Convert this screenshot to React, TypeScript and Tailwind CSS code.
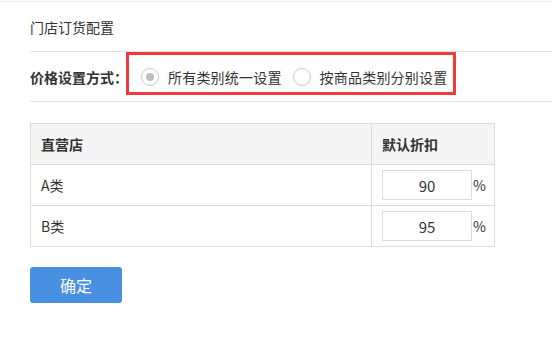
import { useState } from 'react'

const rows = [
  { name: 'A类', value: '90' },
  { name: 'B类', value: '95' },
]

function Radio({ checked, label }: { checked: boolean; label: string }) {
  return (
    <label className="flex items-center gap-[9px] cursor-pointer">
      <span className="w-[18px] h-[18px] rounded-full border border-[#c8c8c8] bg-white flex items-center justify-center">
        {checked && <span className="w-[8px] h-[8px] rounded-full bg-[#bdbdbd]" />}
      </span>
      <span className="text-[14px] tracking-[0.2px] text-[#333]">{label}</span>
    </label>
  )
}

export default function App() {
  const [values, setValues] = useState(rows.map((r) => r.value))

  return (
    <div
      className="w-[552px] h-[346px] bg-white text-[#333] leading-none"
      style={{ fontFamily: '"Noto Sans CJK SC", "Liberation Sans", sans-serif' }}
    >
      <div className="pt-[1px]">
        <div className="border-t border-[#eeeeee]" />
      </div>

      {/* title */}
      <div className="pl-[30px]">
        <div className="h-[50px] flex items-center text-[14px] text-[#333] border-b border-[#e3e3e3]">
          门店订货配置
        </div>

        {/* price setting row */}
        <div className="relative h-[50px] flex items-center border-b border-[#e3e3e3]">
          <span className="text-[14px] font-bold text-[#333] w-[111px]">价格设置方式：</span>
          <div className="flex items-center gap-[11px]">
            <Radio checked label="所有类别统一设置" />
            <Radio checked={false} label="按商品类别分别设置" />
          </div>
          <div className="absolute left-[96px] top-0 w-[330px] h-[43px] border-[3px] border-[#ef3b3b] pointer-events-none" />
        </div>
      </div>

      {/* table */}
      <div className="pl-[30px] pt-[21px]">
        <table className="border-collapse text-[14px]">
          <thead>
            <tr className="bg-[#f5f5f5] h-[41px]">
              <th className="w-[341px] border border-[#dddddd] text-left font-bold pl-[10px]">直营店</th>
              <th className="w-[123px] border border-[#dddddd] text-left font-bold pl-[10px]">默认折扣</th>
            </tr>
          </thead>
          <tbody>
            {rows.map((r, i) => (
              <tr key={r.name} className="h-[41px]">
                <td className="border border-[#dddddd] pl-[10px]">{r.name}</td>
                <td className="border border-[#dddddd] pl-[10px]">
                  <div className="flex items-center gap-[1px]">
                    <input
                      value={values[i]}
                      onChange={(e) => {
                        const next = [...values]
                        next[i] = e.target.value
                        setValues(next)
                      }}
                      className="w-[90px] h-[30px] border border-[#dddddd] text-center text-[15px] text-[#333] outline-none"
                    />
                    <span className="text-[14px]">%</span>
                  </div>
                </td>
              </tr>
            ))}
          </tbody>
        </table>

        <button className="mt-[20px] w-[92px] h-[36px] rounded-[3px] bg-[#4a90e2] text-white text-[16px]">
          确定
        </button>
      </div>
    </div>
  )
}
